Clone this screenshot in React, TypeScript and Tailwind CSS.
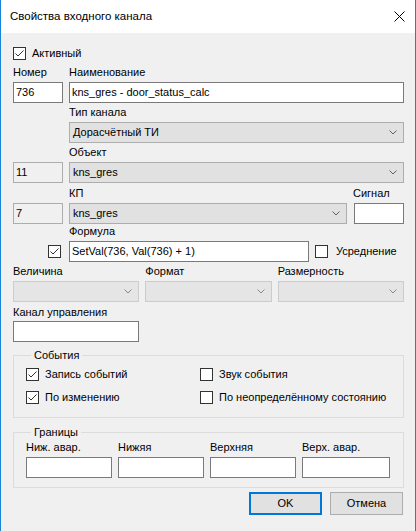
import React from "react";

// Диалог свойств входного канала (стиль Windows 10)

function CheckBox({ checked }: { checked?: boolean }) {
  return (
    <span className="flex h-[13px] w-[13px] shrink-0 items-center justify-center border border-[#333333] bg-white">
      {checked && (
        <svg width="11" height="11" viewBox="0 0 11 11">
          <path d="M1.5 5.5 L4 8 L9.5 2.5" fill="none" stroke="#333333" strokeWidth="1" />
        </svg>
      )}
    </span>
  );
}

function TextBox({
  value,
  className = "",
  readOnly,
}: {
  value?: string;
  className?: string;
  readOnly?: boolean;
}) {
  return (
    <div
      className={`flex h-[21px] items-center border pl-[2px] ${
        readOnly ? "border-[#adadad] bg-[#f0f0f0]" : "border-[#7a7a7a] bg-white"
      } ${className}`}
    >
      {value}
    </div>
  );
}

function Combo({
  value,
  className = "",
  disabled,
}: {
  value?: string;
  className?: string;
  disabled?: boolean;
}) {
  return (
    <div
      className={`flex h-[21px] items-center justify-between border pl-[3px] pr-[6px] ${
        disabled ? "border-[#cccccc] bg-[#e5e5e5]" : "border-[#adadad] bg-[#e1e1e1]"
      } ${className}`}
    >
      <span>{value}</span>
      <svg width="8" height="5" viewBox="0 0 8 5">
        <path
          d="M0.5 0.5 L4 4 L7.5 0.5"
          fill="none"
          stroke={disabled ? "#8a8a8a" : "#606060"}
          strokeWidth="1"
        />
      </svg>
    </div>
  );
}

function Label({ children, className = "" }: { children: React.ReactNode; className?: string }) {
  return <div className={`h-[15px] leading-[15px] ${className}`}>{children}</div>;
}

export default function App() {
  return (
    <div
      className="flex h-[531px] w-[416px] flex-col border-x border-[#1883d7] bg-[#f0f0f0] text-[11px] text-black"
      style={{ fontFamily: '"Liberation Sans", Arial, sans-serif' }}
    >
      {/* заголовок окна */}
      <div className="flex h-[33px] shrink-0 items-center justify-between bg-white pl-[9px] pr-[10px] text-[11.5px]">
        <span>Свойства входного канала</span>
        <svg width="11" height="11" viewBox="0 0 11 11">
          <path d="M0.5 0.5 L10.5 10.5 M10.5 0.5 L0.5 10.5" stroke="#000" strokeWidth="1" />
        </svg>
      </div>

      <div className="flex flex-col pl-[12px] pr-[11px]">
        <div className="mt-[14px] flex h-[13px] items-center gap-[6px]">
          <CheckBox checked />
          <span>Активный</span>
        </div>

        <div className="mt-[5px] flex">
          <Label className="w-[56px]">Номер</Label>
          <Label>Наименование</Label>
        </div>
        <div className="mt-[2px] flex gap-[6px]">
          <TextBox value="736" className="w-[50px]" />
          <TextBox value="kns_gres - door_status_calc" className="flex-1" />
        </div>

        <div className="flex flex-col pl-[56px]">
          <Label className="mt-[2px]">Тип канала</Label>
          <Combo value="Дорасчётный ТИ" className="mt-[2px]" />
          <Label className="mt-[2px]">Объект</Label>
        </div>
        <div className="mt-[2px] flex gap-[6px]">
          <TextBox value="11" readOnly className="w-[50px]" />
          <Combo value="kns_gres" className="flex-1" />
        </div>

        <div className="mt-[3px] flex">
          <Label className="w-[340px] pl-[56px]">КП</Label>
          <Label>Сигнал</Label>
        </div>
        <div className="mt-[2px] flex gap-[6px]">
          <TextBox value="7" readOnly className="w-[50px]" />
          <Combo value="kns_gres" className="w-[278px]" />
          <TextBox className="ml-[1px] w-[50px]" />
        </div>

        <Label className="pl-[56px]">Формула</Label>
        <div className="mt-[2px] flex items-center">
          <div className="flex w-[56px] justify-end pr-[8px]">
            <CheckBox checked />
          </div>
          <TextBox value="SetVal(736, Val(736) + 1)" className="w-[240px]" />
          <div className="ml-[6px] flex items-center gap-[8px]">
            <CheckBox />
            <span>Усреднение</span>
          </div>
        </div>

        <div className="mt-[2px] grid grid-cols-3 gap-x-[6px]">
          <Label>Величина</Label>
          <Label>Формат</Label>
          <Label>Размерность</Label>
          <Combo disabled className="mt-[2px]" />
          <Combo disabled className="mt-[2px]" />
          <Combo disabled className="mt-[2px]" />
        </div>

        <Label className="mt-[3px]">Канал управления</Label>
        <TextBox className="mt-[1px] w-[126px]" />

        <fieldset className="mt-[6px] border border-[#dcdcdc] pb-[13px] pl-[12px]">
          <legend className="ml-[5px] px-[3px] leading-[15px]">События</legend>
          <div className="mt-[5px] grid grid-cols-[174px_1fr] gap-y-[10px]">
            <div className="flex h-[13px] items-center gap-[6px]">
              <CheckBox checked />
              <span>Запись событий</span>
            </div>
            <div className="flex h-[13px] items-center gap-[6px]">
              <CheckBox />
              <span>Звук события</span>
            </div>
            <div className="flex h-[13px] items-center gap-[6px]">
              <CheckBox checked />
              <span>По изменению</span>
            </div>
            <div className="flex h-[13px] items-center gap-[6px]">
              <CheckBox />
              <span>По неопределённому состоянию</span>
            </div>
          </div>
        </fieldset>

        <fieldset className="mt-[7px] border border-[#dcdcdc] pb-[9px] pl-[12px]">
          <legend className="ml-[5px] px-[3px] leading-[15px]">Границы</legend>
          <div className="grid grid-cols-[86px_86px_86px_88px] gap-x-[6px]">
            <Label>Ниж. авар.</Label>
            <Label>Нижяя</Label>
            <Label>Верхняя</Label>
            <Label>Верх. авар.</Label>
            <TextBox className="mt-[2px]" />
            <TextBox className="mt-[2px]" />
            <TextBox className="mt-[2px]" />
            <TextBox className="mt-[2px]" />
          </div>
        </fieldset>

        <div className="mt-[4px] flex justify-end gap-[8px] pr-[1px]">
          <button className="flex h-[23px] w-[73px] items-center justify-center border-2 border-[#0078d7] bg-[#e1e1e1]">
            OK
          </button>
          <button className="flex h-[23px] w-[73px] items-center justify-center border border-[#adadad] bg-[#e1e1e1]">
            Отмена
          </button>
        </div>
      </div>
    </div>
  );
}
